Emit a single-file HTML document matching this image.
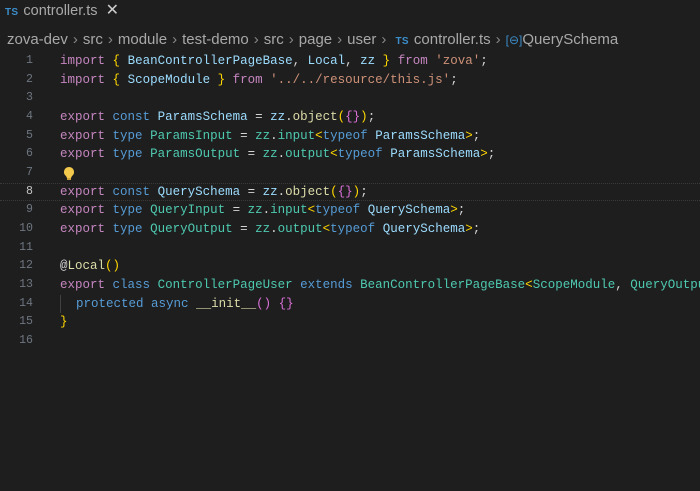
<!DOCTYPE html>
<html><head><meta charset="utf-8"><style>
html,body{margin:0;padding:0;width:700px;height:491px;background:#1e1e1e;overflow:hidden;font-family:"Liberation Sans",sans-serif}
.tab{position:absolute;left:5px;top:1px;height:20px;font-size:14.5px;color:#a8a8a8;line-height:20px;white-space:nowrap}
.ts{color:#3b8ecb;font-weight:bold;font-size:10px;margin-right:5px;letter-spacing:0.3px}
.bc{position:absolute;left:7px;top:30px;font-size:15px;color:#a8a8a8;white-space:nowrap;line-height:20px}
.sep{color:#888;margin:0 5px}
.code{position:absolute;left:0;top:52px;font-family:"Liberation Mono",monospace;font-size:12.5px;width:700px}
.l{height:18.67px;line-height:18.67px;position:relative}
.n{position:absolute;width:33px;left:0;text-align:right;color:#6e7681;font-size:11.6px}
.c{position:absolute;left:60px;color:#d4d4d4;white-space:pre}
.cur{border-top:1px dotted #3a3a3a;border-bottom:1px dotted #3a3a3a;box-sizing:border-box;width:700px;line-height:16.67px}
.cur .n{color:#c6c6c6}
.k{color:#c586c0}.b{color:#569cd6}.v{color:#9cdcfe}.t{color:#4ec9b0}.s{color:#ce9178}.f{color:#dcdcaa}.g{color:#ffd700}.p{color:#da70d6}
</style></head><body>
<div class="tab"><span class="ts">TS</span>controller.ts &nbsp;<span style="color:#ccc;font-size:16px">✕</span></div>
<div class="bc">zova-dev<span class="sep">›</span>src<span class="sep">›</span>module<span class="sep">›</span>test-demo<span class="sep">›</span>src<span class="sep">›</span>page<span class="sep">›</span>user<span class="sep">›</span> <span class="ts">TS</span>controller.ts<span class="sep">›</span><span style="color:#3b8ecb;font-size:12px">[⊖]</span>QuerySchema</div>
<div class="code"><div class="l"><span class="n">1</span><span class="c"><span class="k">import</span> <span class="g">{</span> <span class="v">BeanControllerPageBase</span>, <span class="v">Local</span>, <span class="v">zz</span> <span class="g">}</span> <span class="k">from</span> <span class="s">'zova'</span>;</span></div><div class="l"><span class="n">2</span><span class="c"><span class="k">import</span> <span class="g">{</span> <span class="v">ScopeModule</span> <span class="g">}</span> <span class="k">from</span> <span class="s">'../../resource/this.js'</span>;</span></div><div class="l"><span class="n">3</span></div><div class="l"><span class="n">4</span><span class="c"><span class="k">export</span> <span class="b">const</span> <span class="v">ParamsSchema</span> = <span class="v">zz</span>.<span class="f">object</span><span class="g">(</span><span class="p">{}</span><span class="g">)</span>;</span></div><div class="l"><span class="n">5</span><span class="c"><span class="k">export</span> <span class="b">type</span> <span class="t">ParamsInput</span> = <span class="t">zz</span>.<span class="t">input</span><span class="g">&lt;</span><span class="b">typeof</span> <span class="v">ParamsSchema</span><span class="g">&gt;</span>;</span></div><div class="l"><span class="n">6</span><span class="c"><span class="k">export</span> <span class="b">type</span> <span class="t">ParamsOutput</span> = <span class="t">zz</span>.<span class="t">output</span><span class="g">&lt;</span><span class="b">typeof</span> <span class="v">ParamsSchema</span><span class="g">&gt;</span>;</span></div><div class="l"><span class="n">7</span><svg style="position:absolute;left:63px;top:2px" width="12" height="15" viewBox="0 0 12 15"><path d="M6 1a5 5 0 0 0-3 9l1 2h4l1-2a5 5 0 0 0-3-9z" fill="#f2c94c"/><rect x="4" y="12" width="4" height="2" fill="#c9a03a"/></svg></div><div class="l cur"><span class="n">8</span><span class="c"><span class="k">export</span> <span class="b">const</span> <span class="v">QuerySchema</span> = <span class="v">zz</span>.<span class="f">object</span><span class="g">(</span><span class="p">{}</span><span class="g">)</span>;</span></div><div class="l"><span class="n">9</span><span class="c"><span class="k">export</span> <span class="b">type</span> <span class="t">QueryInput</span> = <span class="t">zz</span>.<span class="t">input</span><span class="g">&lt;</span><span class="b">typeof</span> <span class="v">QuerySchema</span><span class="g">&gt;</span>;</span></div><div class="l"><span class="n">10</span><span class="c"><span class="k">export</span> <span class="b">type</span> <span class="t">QueryOutput</span> = <span class="t">zz</span>.<span class="t">output</span><span class="g">&lt;</span><span class="b">typeof</span> <span class="v">QuerySchema</span><span class="g">&gt;</span>;</span></div><div class="l"><span class="n">11</span></div><div class="l"><span class="n">12</span><span class="c">@<span class="f">Local</span><span class="g">()</span></span></div><div class="l"><span class="n">13</span><span class="c"><span class="k">export</span> <span class="b">class</span> <span class="t">ControllerPageUser</span> <span class="b">extends</span> <span class="t">BeanControllerPageBase</span><span class="g">&lt;</span><span class="t">ScopeModule</span>, <span class="t">QueryOutput</span></span></div><div class="l"><span class="n">14</span><span class="c" style="border-left:1px solid #404040">  <span class="b">protected</span> <span class="b">async</span> <span class="f">__init__</span><span class="p">()</span> <span class="p">{}</span></span></div><div class="l"><span class="n">15</span><span class="c"><span class="g">}</span></span></div><div class="l"><span class="n">16</span></div></div>
</body></html>
